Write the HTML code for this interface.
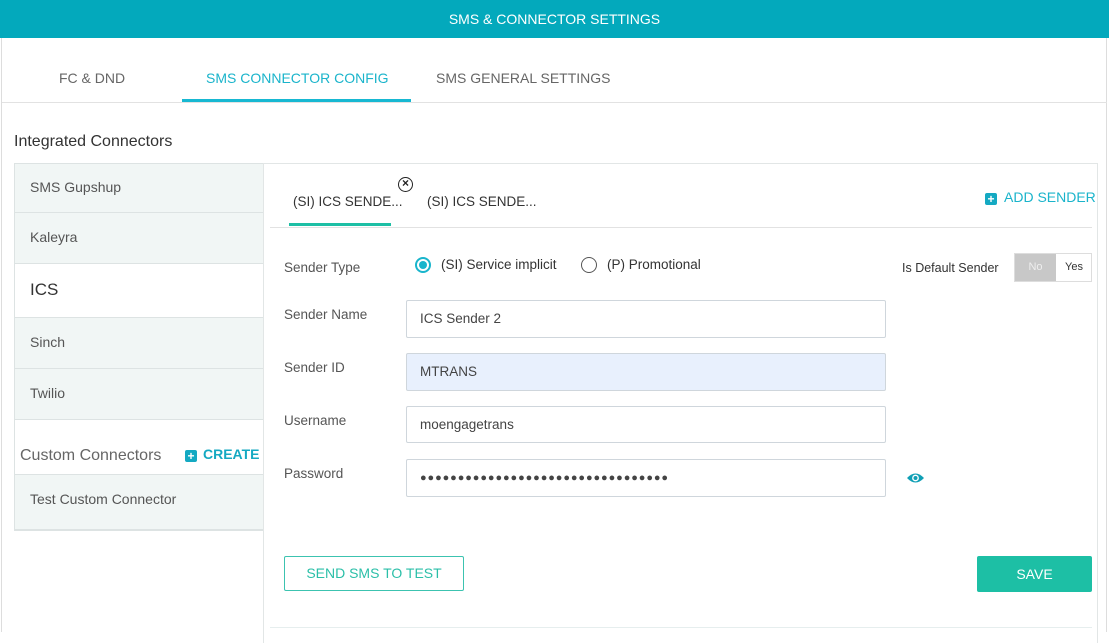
<!DOCTYPE html>
<html><head><meta charset="utf-8"><style>
*{box-sizing:border-box;margin:0;padding:0}
body{width:1109px;height:632px;background:#fff;font-family:"Liberation Sans",sans-serif;position:relative;overflow:hidden;color:#444}
.a{position:absolute}
.hdr{left:0;top:0;width:1109px;height:38px;background:#03a9bc;color:#fff;font-size:14px;text-align:center;line-height:38px}
.tab{font-size:14px;color:#666;top:70px}
.li{left:15px;width:248px;background:#f1f6f5;border-bottom:1px solid #dde3e3;font-size:14px;color:#555;padding-left:15px}
.lbl{left:284px;font-size:13.5px;color:#555}
.inp{left:406px;width:480px;border:1px solid #cfd6dc;border-radius:2px;font-size:13.5px;color:#444;padding-left:13px;background:#fff}
</style></head><body>
<div class="a hdr">SMS &amp; CONNECTOR SETTINGS</div>
<div class="a" style="left:1px;top:38px;width:1px;height:594px;background:#ddd"></div>
<div class="a" style="left:1106px;top:38px;width:1px;height:594px;background:#ddd"></div>
<div class="a tab" style="left:59px">FC &amp; DND</div>
<div class="a tab" style="left:206px;color:#1ab4cb">SMS CONNECTOR CONFIG</div>
<div class="a tab" style="left:436px">SMS GENERAL SETTINGS</div>
<div class="a" style="left:2px;top:102px;width:1105px;height:1px;background:#e2e2e2"></div>
<div class="a" style="left:182px;top:99px;width:229px;height:3px;background:#17b8d2"></div>
<div class="a" style="left:14px;top:133px;font-size:16px;color:#333">Integrated Connectors</div>

<div class="a" style="left:14px;top:163px;width:250px;height:368px;border:1px solid #dde3e3;background:#fff"></div>
<div class="a li" style="top:164px;height:49px;line-height:46px">SMS Gupshup</div>
<div class="a li" style="top:213px;height:51px;line-height:48px">Kaleyra</div>
<div class="a li" style="top:264px;height:54px;line-height:52px;background:#fff;font-size:17px;color:#333">ICS</div>
<div class="a li" style="top:318px;height:51px;line-height:48px">Sinch</div>
<div class="a li" style="top:369px;height:51px;line-height:48px">Twilio</div>
<div class="a" style="left:20px;top:447px;font-size:16px;color:#666">Custom Connectors</div>
<div class="a" style="left:185px;top:446px;font-size:14px;color:#14a9c2;font-weight:bold"><span style="display:inline-block;width:12px;height:12px;background:#14a9c2;border-radius:2px;color:#fff;font-size:12px;line-height:12px;text-align:center;vertical-align:-1px;margin-right:6px">+</span>CREATE</div>
<div class="a li" style="top:474px;height:56px;line-height:48px;border-top:1px solid #dde3e3">Test Custom Connector</div>

<div class="a" style="left:263px;top:163px;width:835px;height:480px;border:1px solid #e2e6e6;border-bottom:none"></div>
<div class="a" style="left:293px;top:194px;font-size:13.5px;color:#333">(SI) ICS SENDE...</div>
<div class="a" style="left:398px;top:177px;width:15px;height:15px;border:1.6px solid #222;border-radius:50%;font-size:12px;line-height:11px;text-align:center;color:#222;font-weight:bold">×</div>
<div class="a" style="left:427px;top:194px;font-size:13.5px;color:#333">(SI) ICS SENDE...</div>
<div class="a" style="left:985px;top:189px;font-size:14px;color:#1ab4cb"><span style="display:inline-block;width:12px;height:12px;background:#14a9c2;border-radius:2px;color:#fff;font-size:12px;line-height:12px;text-align:center;font-weight:bold;vertical-align:-1px;margin-right:7px">+</span>ADD SENDER</div>
<div class="a" style="left:270px;top:227px;width:822px;height:1px;background:#e2e2e2"></div>
<div class="a" style="left:289px;top:223px;width:102px;height:3px;background:#1dbfa5"></div>

<div class="a lbl" style="top:260px">Sender Type</div>
<div class="a" style="left:415px;top:257px;width:16px;height:16px;border:2px solid #19b5cc;border-radius:50%"><div style="margin:2px;width:8px;height:8px;border-radius:50%;background:#19b5cc"></div></div>
<div class="a" style="left:441px;top:257px;font-size:13.5px;color:#333">(SI) Service implicit</div>
<div class="a" style="left:581px;top:257px;width:16px;height:16px;border:1.5px solid #555;border-radius:50%"></div>
<div class="a" style="left:607px;top:257px;font-size:13.5px;color:#333">(P) Promotional</div>
<div class="a" style="left:902px;top:261px;font-size:12.5px;color:#333">Is Default Sender</div>
<div class="a" style="left:1014px;top:253px;width:78px;height:29px;border:1px solid #ddd;font-size:11px;line-height:27px">
<span style="position:absolute;left:0;top:0;width:41px;height:27px;background:#c8c8c8;color:#eee;text-align:center">No</span>
<span style="position:absolute;left:41px;top:0;width:36px;text-align:center;color:#333">Yes</span></div>

<div class="a lbl" style="top:307px">Sender Name</div>
<div class="a inp" style="top:300px;height:38px;line-height:36px">ICS Sender 2</div>
<div class="a lbl" style="top:360px">Sender ID</div>
<div class="a inp" style="top:353px;height:38px;line-height:36px;background:#e8f0fd">MTRANS</div>
<div class="a lbl" style="top:413px">Username</div>
<div class="a inp" style="top:406px;height:37px;line-height:35px">moengagetrans</div>
<div class="a lbl" style="top:466px">Password</div>
<div class="a inp" style="top:459px;height:38px;line-height:36px;letter-spacing:0.9px;font-size:11px">●●●●●●●●●●●●●●●●●●●●●●●●●●●●●●●●●</div>
<svg class="a" style="left:906px;top:471px" width="19" height="14" viewBox="0 0 19 14"><path d="M1 7Q9.5-2 18 7Q9.5 16 1 7Z" fill="#0f9fb5"/><circle cx="9.5" cy="7" r="3.4" fill="#fff"/><circle cx="9.5" cy="7" r="2" fill="#0f9fb5"/></svg>

<div class="a" style="left:284px;top:556px;width:180px;height:35px;border:1px solid #3cc3b0;border-radius:2px;color:#2bbfa8;font-size:14px;text-align:center;line-height:33px">SEND SMS TO TEST</div>
<div class="a" style="left:977px;top:556px;width:115px;height:36px;background:#1dbfa5;border-radius:2px;color:#fff;font-size:14px;text-align:center;line-height:36px">SAVE</div>
<div class="a" style="left:270px;top:627px;width:822px;height:1px;background:#e6eeee"></div>
</body></html>
